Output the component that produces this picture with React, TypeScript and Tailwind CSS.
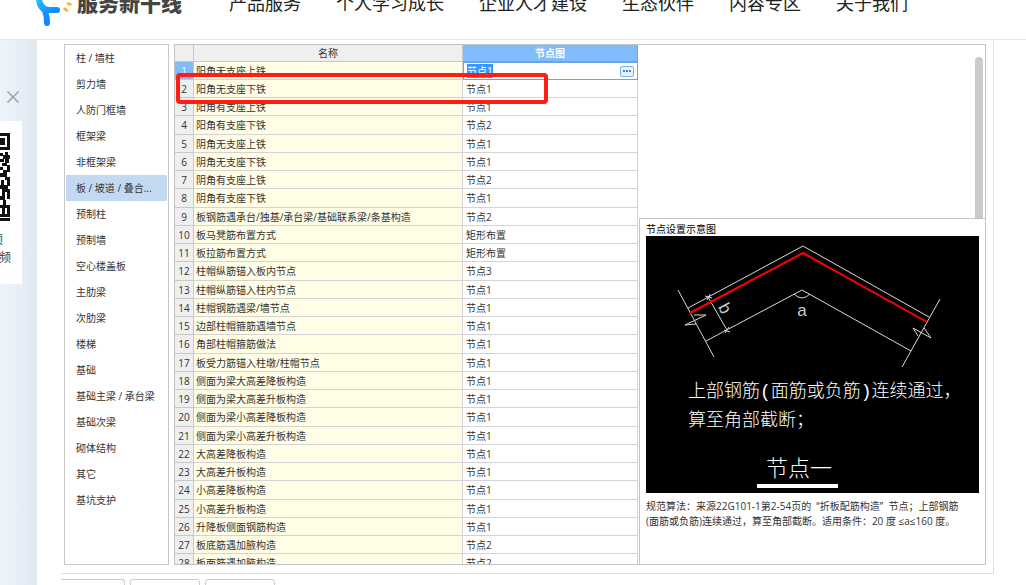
import React from 'react';
import { X } from 'lucide-react';

const navItems = ['产品服务', '个人学习成长', '企业人才建设', '生态伙伴', '内容专区', '关于我们'];

const categories = [
  '柱 / 墙柱', '剪力墙', '人防门框墙', '框架梁', '非框架梁', '板 / 坡道 / 叠合...', '预制柱', '预制墙',
  '空心楼盖板', '主肋梁', '次肋梁', '楼梯', '基础', '基础主梁 / 承台梁', '基础次梁', '砌体结构', '其它', '基坑支护',
];

const rows = [
  ['阳角无支座上铁', '节点1'],
  ['阳角无支座下铁', '节点1'],
  ['阳角有支座上铁', '节点1'],
  ['阳角有支座下铁', '节点2'],
  ['阴角无支座上铁', '节点1'],
  ['阴角无支座下铁', '节点1'],
  ['阴角有支座上铁', '节点2'],
  ['阴角有支座下铁', '节点1'],
  ['板钢筋遇承台/独基/承台梁/基础联系梁/条基构造', '节点2'],
  ['板马凳筋布置方式', '矩形布置'],
  ['板拉筋布置方式', '矩形布置'],
  ['柱帽纵筋锚入板内节点', '节点3'],
  ['柱帽纵筋锚入柱内节点', '节点1'],
  ['柱帽钢筋遇梁/墙节点', '节点1'],
  ['边部柱帽箍筋遇墙节点', '节点1'],
  ['角部柱帽箍筋做法', '节点1'],
  ['板受力筋锚入柱墩/柱帽节点', '节点1'],
  ['侧面为梁大高差降板构造', '节点1'],
  ['侧面为梁大高差升板构造', '节点1'],
  ['侧面为梁小高差降板构造', '节点1'],
  ['侧面为梁小高差升板构造', '节点1'],
  ['大高差降板构造', '节点1'],
  ['大高差升板构造', '节点1'],
  ['小高差降板构造', '节点1'],
  ['小高差升板构造', '节点1'],
  ['升降板侧面钢筋构造', '节点1'],
  ['板底筋遇加腋构造', '节点2'],
  ['板面筋遇加腋构造', '节点2'],
];

const Logo = () => (
  <svg className="h-12 w-9 shrink-0" viewBox="0 0 36 48" fill="none" strokeLinecap="round">
    <defs>
      <linearGradient id="logoBlue" gradientUnits="userSpaceOnUse" x1="0" y1="14" x2="16" y2="38">
        <stop offset="0" stopColor="#2ad4f0" />
        <stop offset="0.6" stopColor="#1c9cff" />
        <stop offset="1" stopColor="#0f86ff" />
      </linearGradient>
    </defs>
    <g stroke="url(#logoBlue)" strokeWidth="6">
      <path d="M3 8v12q1 11 10 11h8" />
      <path d="M5 26q6 6 6 18" />
    </g>
    <path d="M32 24.500l2.500 1M28.500 29.500l2.500 2" stroke="#ffae2b" strokeWidth="2.500" />
  </svg>
);

const Header = () => (
  <header className="flex h-10 shrink-0 items-end overflow-hidden border-b border-[#e5e5e5] bg-white">
    <div className="flex h-[73px] shrink-0 items-center pl-9">
      <a href="#" className="flex w-[193px] items-center gap-[5px]">
        <Logo />
        <span className="pt-[2px] text-[21px] font-black text-[#444]">服务新干线</span>
      </a>
      <nav className="flex gap-[35px] whitespace-nowrap text-lg text-[#222]">
        {navItems.map((item) => (
          <a key={item} href="#">{item}</a>
        ))}
      </nav>
    </div>
  </header>
);

const QrCode = () => (
  <svg className="h-[90px] w-[11px]" viewBox="0 0 11 90" fill="#111">
    <path d="M0 1h10v17H0v-3h7V4H0zM0 6h5v7H0z" />
    <path d="M0 21h3v3H0zM5 20h3v3H5zM3 23h4v4H3zM7 23h3v4H7zM0 27h4v3H0zM5 27h4v4H5zM2 31h5v3H2zM7 33h3v7H7zM0 35h3v3H0zM3 38h4v3H3zM0 41h7v4H0zM5 45h5v3H5zM1 48h3v5H1zM7 48h3v6H7zM0 53h8v4H0zM5 57h5v3H5zM2 57h3v7H2zM7 60h3v7H7zM0 64h5v4H0zM3 68h3v5H3zM0 73h10v3H0zM7 76h3v6H7zM2 76h3v6H2zM0 82h10v3H0zM0 86h10v3H0z" />
  </svg>
);

const SidePromo = () => (
  <aside className="w-9 shrink-0 bg-linear-to-r from-[#edf4fc] to-[#e3e9f2] pt-[47px]">
    <button aria-label="关闭" className="ml-[3px] block text-[#a3a3a3]">
      <X size={20} strokeWidth={2} />
    </button>
    <div className="mt-[14px] flex h-[163px] w-[22px] flex-col items-end overflow-hidden bg-white pt-[11px] pr-[11px] text-xs leading-[18px] text-[#444]">
      <QrCode />
      <span className="mt-[9px] pr-2">顶</span>
      <span>频</span>
    </div>
  </aside>
);

const CategoryList = () => (
  <ul className="w-[105px] shrink-0 overflow-hidden border border-[#c8c8c8] px-px">
    {categories.map((name, i) => (
      <li key={name}>
        <button
          className={`block h-[26px] w-full whitespace-nowrap pl-[10px] text-left ${i === 5 ? 'bg-[#c3d9f1]' : ''}`}
        >
          {name}
        </button>
      </li>
    ))}
  </ul>
);

const MoreButton = () => (
  <button
    aria-label="更多"
    className="flex h-[11px] w-[14px] items-center justify-center gap-px rounded-[2px] border border-[#7db0e8] bg-[#eaf3fd]"
  >
    <i className="size-[2px] bg-[#3d83d0]" />
    <i className="size-[2px] bg-[#3d83d0]" />
    <i className="size-[2px] bg-[#3d83d0]" />
  </button>
);

const NodeTable = () => (
  <div className="relative w-[463px] shrink-0">
    <table className="w-full table-fixed border-separate border-spacing-0">
      <colgroup>
        <col className="w-[19px]" />
        <col className="w-[269px]" />
        <col />
      </colgroup>
      <thead>
        <tr className="h-[17px] bg-[#efefef]">
          <th className="border-r border-b border-[#c8c8c8] p-0" />
          <th className="border-r border-b border-[#c8c8c8] p-0 font-normal">名称</th>
          <th className="border-r border-b border-[#6ba5e7] bg-[#80bbfb] p-0 font-bold text-white">节点图</th>
        </tr>
      </thead>
      <tbody>
        {rows.map(([name, node], i) => (
          <tr key={name} className="h-[18px] leading-[14px] nth-[4n]:h-[19px]">
            <td
              className={`border-r border-b border-[#c8c8c8] p-0 text-center ${i === 0 ? 'bg-[#80bbfb] text-white' : 'bg-[#efefef]'}`}
            >
              {i + 1}
            </td>
            <td className="border-r border-b border-[#d4d4d4] bg-[#fffde5] py-0 pr-0 pl-[2px] whitespace-nowrap">{name}</td>
            {i === 0 ? (
              <td className="border border-[#6ba5e7] p-0">
                <div className="flex items-center justify-between px-[3px]">
                  <span className="bg-[#3399ff] text-white">{node}</span>
                  <MoreButton />
                </div>
              </td>
            ) : (
              <td className="border-r border-b border-[#d4d4d4] py-0 pr-0 pl-[3px]">{node}</td>
            )}
          </tr>
        ))}
      </tbody>
    </table>
    {/* 第 2 行标注框 */}
    <div className="absolute top-[28px] left-px h-[31px] w-[372px] rounded-[4px] border-4 border-[#ff1f12]" />
  </div>
);

const NodeDiagram = () => (
  <svg className="block w-full bg-black" viewBox="0 0 333 257" fill="none">
    <g stroke="#d8d8d8" strokeWidth="1">
      <path d="M42 72 157 10 283 81" />
      <path d="M60 105 156 54 265 115" />
      <path d="M32 54 68 121M294 63 256 131" />
      <path d="M48 79h12L39 89l11-1" />
      <path d="M272 100l-5-8 18 10-7-10" />
      <path d="M62 61l19 33M59 60l7 2M78 94l6 2M61 64l3-6M79 97l4-6" />
      <path d="M148 58q8 8 16 0" />
    </g>
    <path d="M44 77 157 17 281 86" stroke="#f00" strokeWidth="2" />
    <rect x="111" y="248" width="81" height="4" fill="#fff" />
    <g fill="#fff" className="font-['Liberation_Mono','Noto_Sans_CJK_SC',monospace] font-light">
      <text x="156" y="80" textAnchor="middle" fill="#ccc" className="font-['Liberation_Sans',sans-serif] text-[17px]">a</text>
      <text
        x="74"
        y="75"
        textAnchor="middle"
        fill="#ccc"
        transform="rotate(62 74 75)"
        className="font-['Liberation_Sans',sans-serif] text-[17px]"
      >
        b
      </text>
      <text x="42" y="161" className="text-[18px]">上部钢筋(面筋或负筋)连续通过，</text>
      <text x="42" y="190" className="text-[18px]">算至角部截断；</text>
      <text x="153" y="240" textAnchor="middle" className="text-[22px]">节点一</text>
    </g>
  </svg>
);

const PreviewPanel = () => (
  <section className="flex min-w-0 flex-1 flex-col">
    <div className="flex h-[173px] shrink-0 justify-end pt-3 pr-[2px]">
      <div className="w-2 rounded-t-full bg-[#cbcbcb]" />
    </div>
    <div className="ml-px flex-1 border-t border-l border-[#c4c4c4] px-[6px]">
      <h2 className="h-[17px] leading-[20px] text-black">节点设置示意图</h2>
      <NodeDiagram />
      <p className="pt-[6px] pr-3 leading-[15px]">
        规范算法：来源22G101-1第2-54页的&nbsp; “折板配筋构造” &nbsp;节点；上部钢筋(面筋或负筋)连续通过，算至角部截断。适用条件：20 度 ≤a≤160 度。
      </p>
    </div>
  </section>
);

export default function App() {
  return (
    <div
      lang="zh-CN"
      className="flex h-screen flex-col overflow-hidden bg-white font-['Open_Sans','Noto_Sans_CJK_SC',sans-serif] text-[10px] text-[#333]"
    >
      <Header />
      <div className="flex min-h-0 flex-1">
        <SidePromo />
        <main className="mr-8 flex min-w-0 flex-1 flex-col border-l border-[#e3e6ea] pl-6">
          <div className="flex min-h-0 flex-1 gap-[5px] border-r border-b border-[#dcdfe4] pt-1 pr-[7px] pb-2 pl-[3px]">
            <CategoryList />
            <div className="flex min-w-0 flex-1 overflow-hidden border border-[#c4c4c4]">
              <NodeTable />
              <PreviewPanel />
            </div>
          </div>
          <div className="flex h-[11px] shrink-0 gap-[5px] overflow-hidden pt-[5px]">
            <button aria-label="上一页" className="h-6 w-16 shrink-0 rounded-tr-[3px] border-t border-r border-[#ccc]" />
            <button aria-label="列表" className="h-6 w-[70px] shrink-0 rounded-[3px] border border-[#ccc]" />
            <button aria-label="下一页" className="h-6 w-[70px] shrink-0 rounded-[3px] border border-[#ccc]" />
          </div>
        </main>
      </div>
    </div>
  );
}
